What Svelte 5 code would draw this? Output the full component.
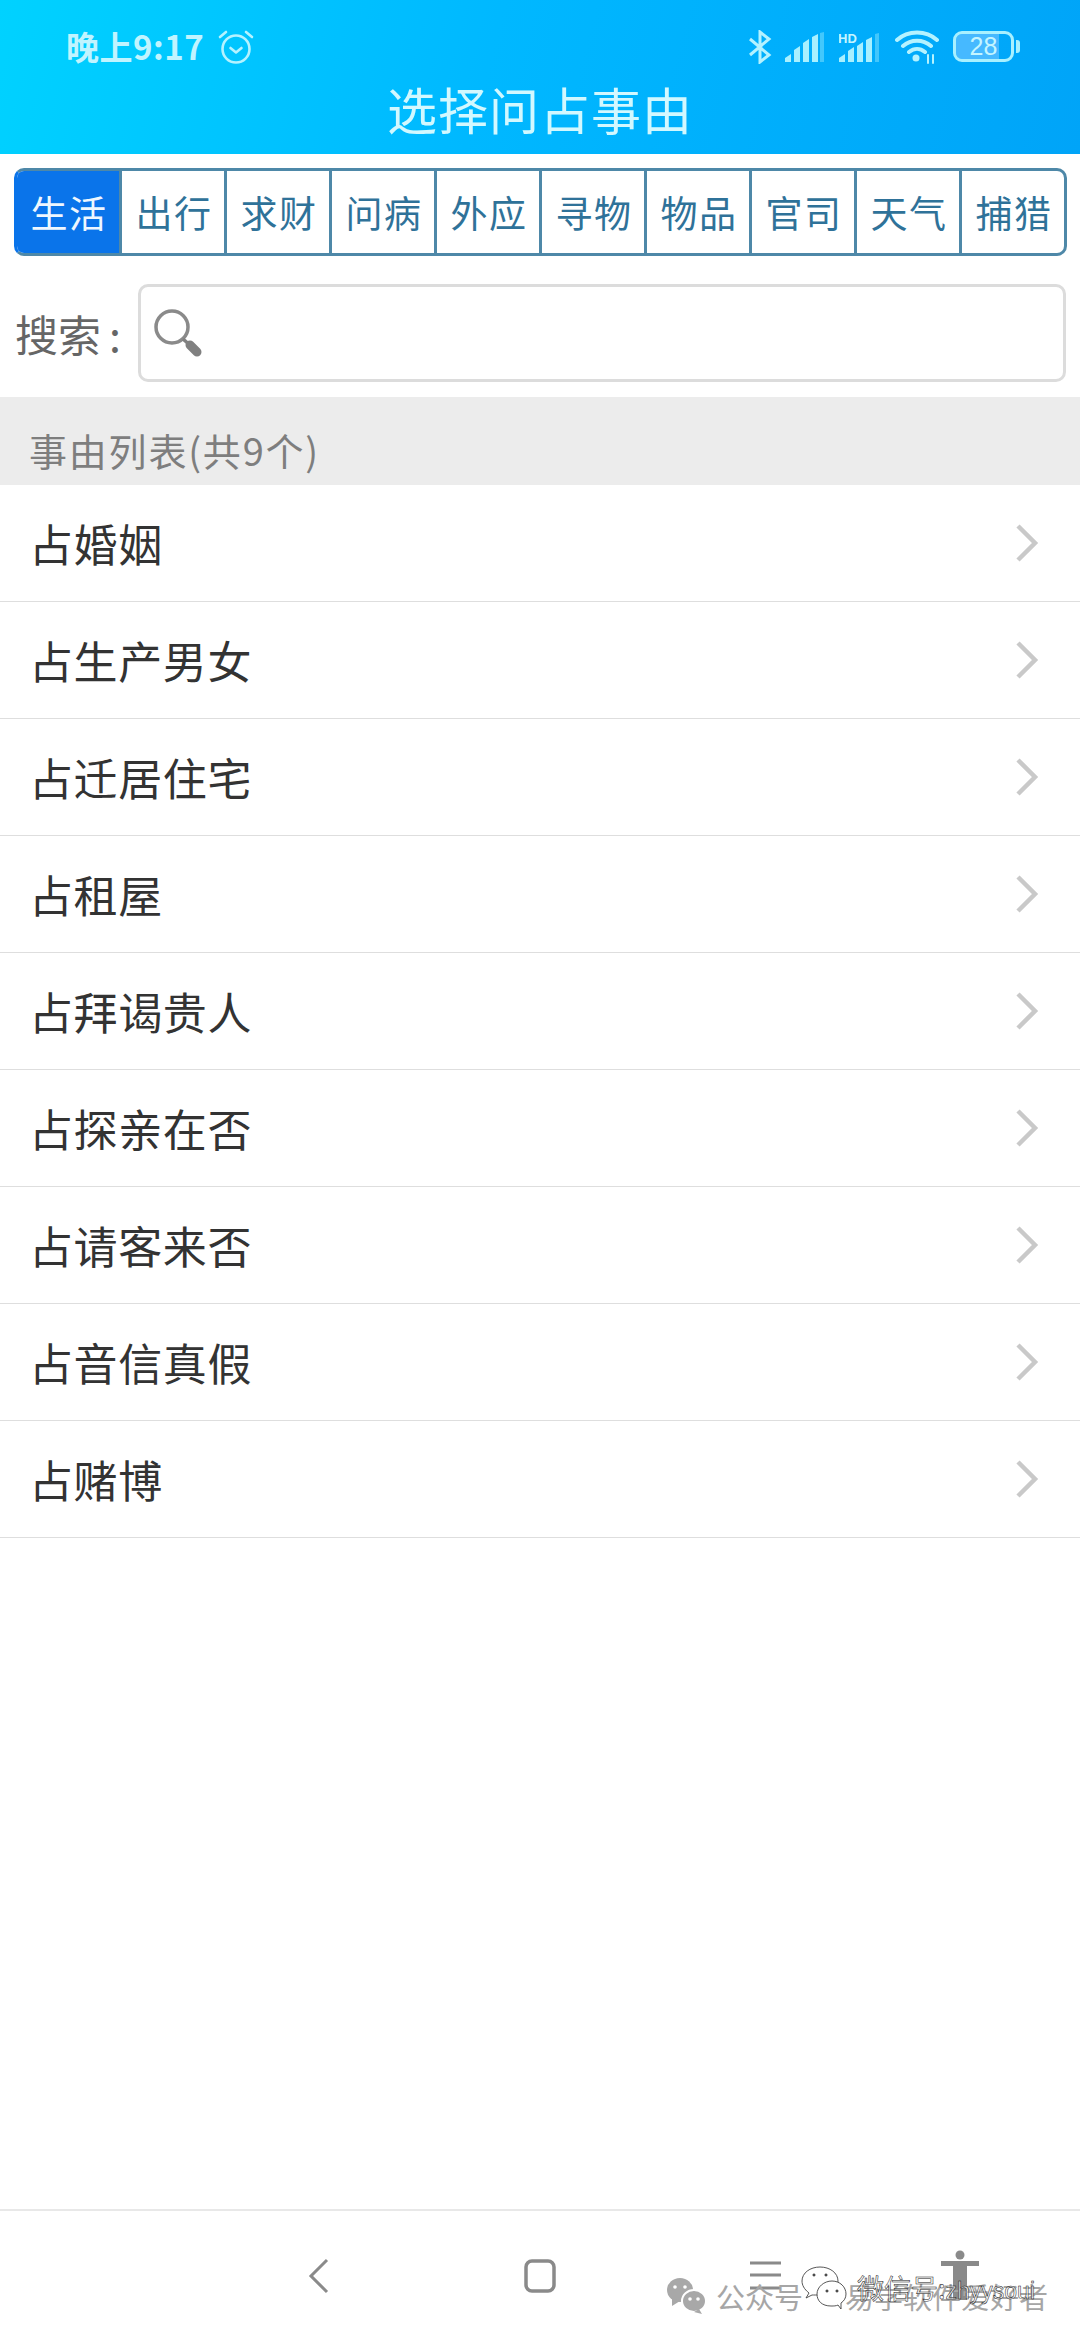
<script>
  const tabs = ['生活','出行','求财','问病','外应','寻物','物品','官司','天气','捕猎'];
  const items = ['占婚姻','占生产男女','占迁居住宅','占租屋','占拜谒贵人','占探亲在否','占请客来否','占音信真假','占赌博'];
</script>

<div class="page">
  <header class="top">
    <div class="status">
      <div class="left">
        <span class="time">晚上9:17</span>
        <svg class="alarm" width="36" height="36" viewBox="0 0 36 36" fill="none" stroke="#b4f2ff" stroke-width="2.600">
          <circle cx="18" cy="20" r="13.5"/>
          <path d="M12.5 19l5.500 4.500 5.500-4.500" stroke-linecap="round" stroke-linejoin="round"/>
          <path d="M2 8l6-5M34 8l-6-5" stroke-linecap="round"/>
        </svg>
      </div>
      <div class="right">
        <svg class="bt" width="24" height="34" viewBox="0 0 24 34" fill="none" stroke="#b4f2ff" stroke-width="3">
          <path d="M2 9l19 16-9 7V2l9 7L2 25"/>
        </svg>
        <svg class="sig1" width="40" height="30" viewBox="0 0 40 30" fill="#a8f0ff">
          <path d="M0 30v-4l6-4v8zM9 30V18l6-4v16zM18 30V11l6-4v23zM27 30V5l6-3v28z"/>
          <path d="M35 30V1l4-1v30z" opacity=".4"/>
        </svg>
        <svg class="sig2" width="41" height="30" viewBox="0 0 41 30" fill="#a8f0ff">
          <path d="M0 30v-4l6-4v8zM9 30V19l6-4v15zM18 30V14l6-4v20zM27 30V8l6-3v25z"/>
          <path d="M36 30V2l4-1v29z" opacity=".4"/>
          <text x="-1" y="11" class="hd">HD</text>
        </svg>
        <svg class="wifi" width="44" height="34" viewBox="0 0 44 34" fill="none" stroke="#b4f2ff" stroke-width="4" stroke-linecap="round">
          <path d="M2 10c11-10 29-10 40 0M8 16c8-7 20-7 28 0M14 22c5-4 11-4 16 0"/>
          <circle cx="21" cy="28" r="3.500" fill="#b4f2ff" stroke="none"/>
          <path d="M33 25v8M38 25v8" stroke-width="2"/>
        </svg>
        <div class="battery"><span class="level">28</span></div>
        <span class="cap"></span>
      </div>
    </div>
    <h1>选择问占事由</h1>
  </header>

  <nav class="tabs">
    {#each tabs as t, i}
      <div class="tab" class:active={i === 0}>{t}</div>
    {/each}
  </nav>

  <div class="search">
    <span class="search-label">搜索<span class="colon">:</span></span>
    <div class="search-box">
      <svg width="52" height="52" viewBox="0 0 52 52" fill="none">
        <circle cx="22" cy="20" r="16" stroke="#8a8a8a" stroke-width="3.500"/>
        <path d="M33 32l8 7" stroke="#808080" stroke-width="3.500"/>
        <path d="M40 38l7 7" stroke="#808080" stroke-width="9" stroke-linecap="round"/>
      </svg>
    </div>
  </div>

  <div class="section">事由列表(共9个)</div>

  <ul class="list">
    {#each items as it}
      <li class="row">
        <span>{it}</span>
        <svg width="24" height="38" viewBox="0 0 24 38" fill="none" stroke="#c9c9c9" stroke-width="4.500">
          <path d="M3 2l17 17L3 36"/>
        </svg>
      </li>
    {/each}
  </ul>

  <footer class="nav">
    <svg class="n-back" width="24" height="36" viewBox="0 0 24 36" fill="none" stroke="#8a8a8a" stroke-width="3"><path d="M21 2L5 18l16 16"/></svg>
    <svg class="n-home" width="32" height="34" viewBox="0 0 32 34" fill="none" stroke="#8a8a8a" stroke-width="3.500"><rect x="2" y="2" width="28" height="30" rx="6"/></svg>
    <svg class="n-menu" width="31" height="30" viewBox="0 0 31 30" fill="none" stroke="#8a8a8a" stroke-width="3"><path d="M0 2h31M0 14h31M0 27h31"/></svg>
    <svg class="n-person" width="38" height="52" viewBox="0 0 38 52" fill="#8a8a8a"><circle cx="19" cy="5" r="4.500"/><path d="M0 11h38v5H26v34H12V16H0z"/></svg>
  </footer>

  <div class="wm">
    <svg class="wm-logo" width="42" height="36" viewBox="0 0 42 36" fill="#a8a8a8">
      <ellipse cx="14" cy="12" rx="13" ry="12"/>
      <path d="M6 20l0 8 8-5z"/>
      <ellipse cx="28" cy="23" rx="12" ry="11" stroke="#fff" stroke-width="2"/>
      <path d="M33 31l3 5-8-2z"/>
      <circle cx="9" cy="9" r="1.800" fill="#fff"/><circle cx="19" cy="9" r="1.800" fill="#fff"/>
      <circle cx="24" cy="21" r="1.800" fill="#fff"/><circle cx="32" cy="21" r="1.800" fill="#fff"/>
    </svg>
    <span class="wm-text">公众号 · 易学软件爱好者</span>
  </div>
  <div class="wm2">
    <svg width="50" height="46" viewBox="0 0 50 46" fill="#fff" stroke="#444" stroke-width="0.900">
      <path d="M6 33l3-5C4 24 2 20 2 16 2 8 10 2 20 2s18 6 18 14c0 8-8 14-18 14-3 0-6 0-8 0z"/>
      <path d="M41 44l-3-4c-2 1-4 1-7 1-9 0-14-5-14-12S24 16 32 16s14 6 14 13c0 4-2 7-5 9z"/>
      <circle cx="14" cy="10" r="1.100" fill="#333"/><circle cx="26" cy="10" r="1.100" fill="#333"/>
      <circle cx="27" cy="26" r="1.100" fill="#333"/><circle cx="37" cy="26" r="1.100" fill="#333"/>
    </svg>
    <span class="wm2-text">微信号:<span class="latin">zhyysoui</span></span>
  </div>
</div>

<style>
  :global(body) { margin: 0; background: #fff; }
  .page {
    position: relative;
    width: 1080px;
    height: 2340px;
    display: flex;
    flex-direction: column;
    overflow: hidden;
    background: #fff;
    font-family: "Noto Sans CJK SC", "Noto Sans", sans-serif;
  }
  .top {
    height: 154px;
    box-sizing: border-box;
    background: linear-gradient(105deg, #00d2ff 0%, #00b8ff 45%, #00a4f8 100%);
    display: flex;
    flex-direction: column;
    color: #d2f8ff;
  }
  .status {
    height: 83px;
    padding: 10px 60px 0 66px;
    box-sizing: border-box;
    display: flex;
    justify-content: space-between;
    align-items: center;
  }
  .left, .right { display: flex; align-items: center; }
  .time { font-size: 33px; font-weight: 700; line-height: 1; color: #c0f4ff; font-family: "Noto Sans CJK SC", Roboto, sans-serif; letter-spacing: 0.5px; }
  .alarm { margin-left: 14px; }
  .sig1 { margin-left: 13px; }
  .sig2 { margin-left: 14px; }
  .wifi { margin-left: 15px; }
  .hd { font-size: 13px; font-weight: 700; font-family: "Liberation Sans", sans-serif; fill: #c4f5ff; }
  .battery {
    margin-left: 14px;
    width: 61px;
    height: 31px;
    box-sizing: border-box;
    border: 3.5px solid #a8f0ff;
    border-radius: 9px;
    display: flex;
    align-items: center;
    justify-content: center;
    background: linear-gradient(90deg, #46b9ff 0 78%, transparent 78%);
    background-clip: padding-box;
  }
  .level { font-size: 25px; line-height: 1; color: #c4f5ff; font-family: "Liberation Sans", sans-serif; }
  .cap { width: 4px; height: 13px; margin-left: 2px; background: #a8f0ff; border-radius: 0 3px 3px 0; }
  h1 {
    margin: 0;
    font-size: 50px;
    line-height: 50px;
    font-weight: 400;
    text-align: center;
    letter-spacing: 1px;
  }
  .tabs {
    margin: 14px 14px 0;
    width: 1053px;
    height: 88px;
    box-sizing: border-box;
    display: flex;
    border: 3px solid #4e88a8;
    border-radius: 10px;
    overflow: hidden;
  }
  .tab {
    flex: 1;
    display: flex;
    align-items: center;
    justify-content: center;
    padding-left: 2px;
    font-size: 37px;
    color: #2f7299;
    border-left: 3px solid #4e88a8;
    letter-spacing: 1.5px;
  }
  .tab:first-child { border-left: none; }
  .tab.active { background: #0a74ea; color: #eef7ff; }
  .tabs:has(.active:first-child) { border-left-color: #0a74ea; }
  .search {
    height: 141px;
    display: flex;
    align-items: center;
    padding: 13px 14px 0 15px;
    box-sizing: border-box;
  }
  .search-label { width: 123px; font-size: 43px; color: #666; line-height: 1; flex: none; }
  .colon { margin-left: 8px; }
  .search-box {
    flex: 1;
    height: 98px;
    box-sizing: border-box;
    border: 3px solid #dcdcdc;
    border-radius: 10px;
    display: flex;
    align-items: center;
    padding-left: 9px;
  }
  .section {
    height: 88px;
    background: #ececec;
    box-sizing: border-box;
    padding: 28px 0 0 29px;
    font-size: 38px;
    line-height: 50px;
    color: #7e7e7e;
    letter-spacing: 1.8px;
  }
  .list { margin: 0; padding: 0; list-style: none; flex: 1; }
  .row {
    height: 117px;
    box-sizing: border-box;
    border-bottom: 1px solid #dedede;
    display: flex;
    align-items: center;
    justify-content: space-between;
    padding: 0 41px 0 29px;
    font-size: 44px;
    letter-spacing: 0.6px;
    color: #333;
  }
  .nav {
    height: 131px;
    box-sizing: border-box;
    border-top: 2px solid #e8e8e8;
    display: flex;
    align-items: center;
    padding: 0 0 0 306px;
  }
  .n-home { margin-left: 194px; }
  .n-menu { margin-left: 194px; }
  .n-person { margin-left: 160px; }
  .wm {
    position: absolute;
    left: 666px;
    top: 2278px;
    display: flex;
    align-items: center;
    gap: 8px;
  }
  .wm-text { font-size: 29px; line-height: 1; color: #a6a6a6; white-space: nowrap; }
  .wm2 {
    position: absolute;
    left: 800px;
    top: 2265px;
    display: flex;
    align-items: center;
  }
  .wm2-text {
    margin-left: 7px;
    font-size: 27px;
    line-height: 1;
    color: rgba(255,255,255,.6);
    -webkit-text-stroke: 0.5px #111;
    white-space: nowrap;
  }
  .latin { font-family: "Liberation Sans", sans-serif; font-size: 23px; }
</style>
